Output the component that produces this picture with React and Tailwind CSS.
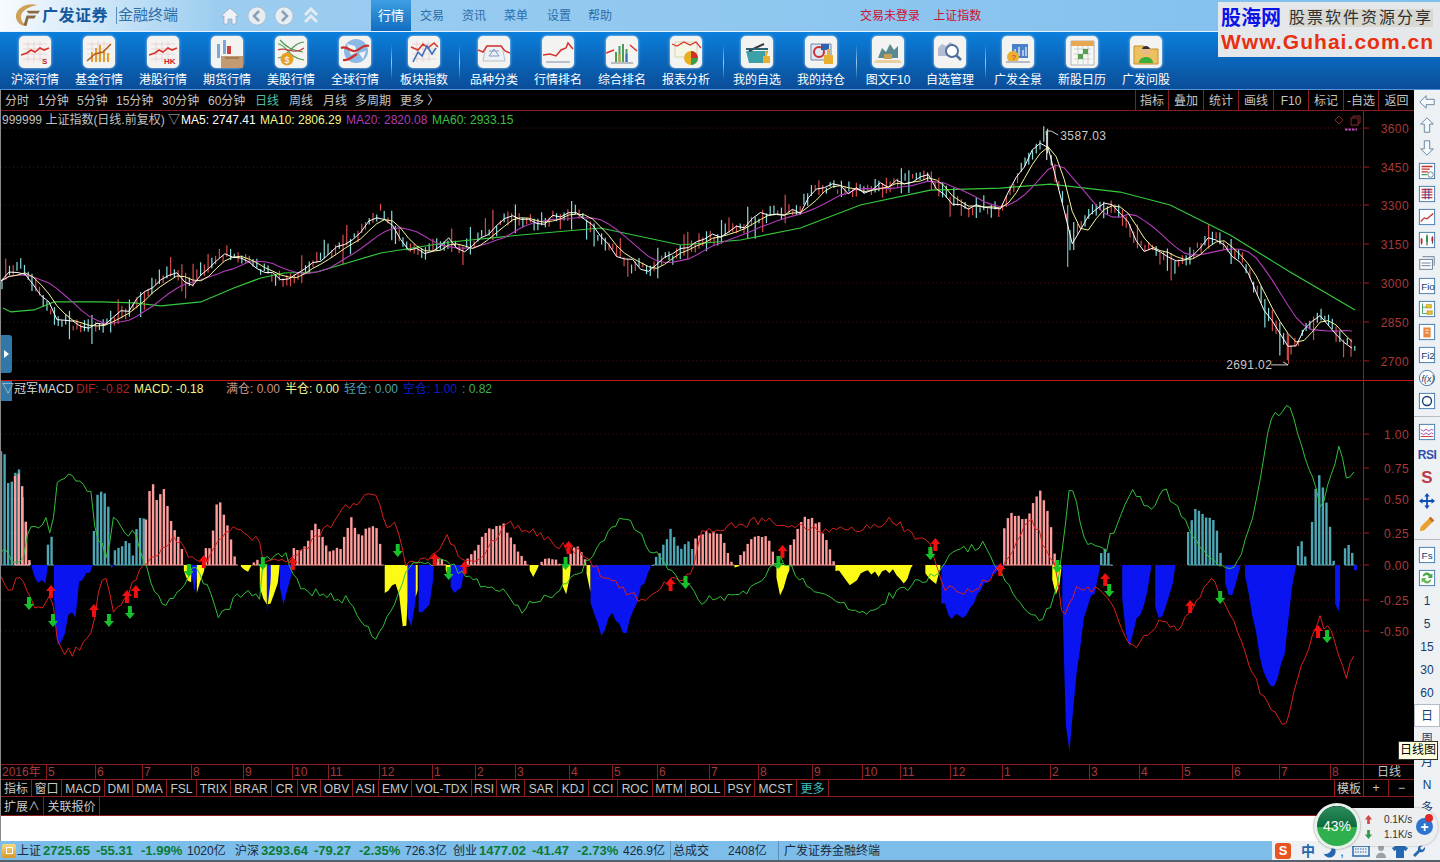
import React from 'react';

// seeded noise so the chart is the same on every load
let seed = 20160817;
const rnd = () => {
  seed = (seed * 1664525 + 1013904223) % 4294967296;
  return seed / 4294967296;
};

const lerp = (pts, x) => {
  if (x <= pts[0][0]) return pts[0][1];
  for (let i = 1; i < pts.length; i++) {
    if (x <= pts[i][0]) {
      const [x0, y0] = pts[i - 1];
      const [x1, y1] = pts[i];
      return y0 + ((y1 - y0) * (x - x0)) / (x1 - x0 || 1);
    }
  }
  return pts[pts.length - 1][1];
};
const toLine = pts => pts.map(p => `${p[0].toFixed(1)},${p[1].toFixed(1)}`).join(' ');
const jitter = (pts, amp, step = 4) => {
  const out = [];
  const end = pts[pts.length - 1][0];
  for (let x = pts[0][0]; x <= end; x += step) out.push([x, lerp(pts, x) + (rnd() - 0.5) * amp]);
  return out;
};
const lagged = (pts, n) =>
  pts.map((p, i) => {
    const from = Math.max(0, i - n + 1);
    const part = pts.slice(from, i + 1);
    return [p[0], part.reduce((s, q) => s + q[1], 0) / part.length];
  });

const CLOSE = [[0,280],[20,265],[40,295],[60,322],[90,328],[120,315],[140,300],[165,272],[190,283],[218,255],[250,262],[285,285],[320,258],[350,240],[380,212],[400,240],[420,255],[445,240],[460,250],[510,218],[540,222],[580,212],[600,240],[625,262],[650,268],[680,250],[720,235],[770,212],[800,210],[815,185],[860,192],[925,175],[960,208],[1000,210],[1020,170],[1045,135],[1062,200],[1072,240],[1090,210],[1115,205],[1140,245],[1175,265],[1215,235],[1245,265],[1270,320],[1290,350],[1320,315],[1340,335],[1356,350]];
const MA60 = [[2,308],[10,312],[33,310],[53,302],[100,302],[133,303],[160,306],[200,302],[233,288],[260,278],[283,273],[316,272],[380,253],[450,242],[520,235],[600,228],[680,245],[740,240],[800,228],[860,205],[930,190],[1000,188],[1050,184],[1120,192],[1170,205],[1230,235],[1290,272],[1355,310]];

const ma5 = jitter(CLOSE, 9, 8);
const ma10 = lagged(ma5, 3);
const ma20 = lagged(ma5, 7);
const candles = [];
for (let x = 1; x < 1357; x += 3.75) {
  const mid = lerp(CLOSE, x) + (rnd() - 0.5) * 8;
  const up = rnd() > 0.5;
  // most days are a thin stroke, only some stick far out
  const long = rnd() > 0.7;
  candles.push({ x, up, hi: mid - 2 - rnd() * (long ? 14 : 5), lo: mid + 2 + rnd() * (long ? 16 : 5) });
}

const HIST = [
  ['t',[[0,450],[3,448],[8,490],[13,475],[18,470],[22,500],[26,537],[29,565]]],
  ['p',[[14,474],[18,472],[22,490],[26,537],[29,565]]],
  ['b',[[30,565],[35,583],[45,582],[47,565]]],
  ['t',[[47,543],[52,537],[53,565]]],
  ['b',[[53,600],[55,637],[58,650],[67,627],[68,603],[75,617],[78,583],[90,570],[92,565]]],
  ['t',[[93,530],[95,497],[102,488],[108,507],[110,565]]],
  ['b',[[110,565],[112,577],[114,565]]],
  ['t',[[114,552],[127,540],[132,555],[137,520],[143,518],[145,565]]],
  ['p',[[145,520],[150,478],[157,503],[162,485],[170,520],[177,537],[182,553],[183,565]]],
  ['y',[[183,572],[190,583],[191,565]]],
  ['b',[[190,570],[192,600],[196,575]]],
  ['y',[[196,590],[200,583],[203,570],[204,565]]],
  ['p',[[205,550],[210,547],[216,502],[220,503],[227,527],[233,553],[237,565]]],
  ['y',[[240,568],[243,572],[248,573],[252,566]]],
  ['p',[[253,562],[257,558],[260,565]]],
  ['y',[[259,590],[262,597],[267,610],[272,600],[278,580],[279,565]]],
  ['b',[[266,610],[268,616],[270,575]]],
  ['b',[[279,590],[283,608],[290,577],[292,565]]],
  ['p',[[293,550],[303,548],[315,523],[327,550],[340,547],[350,517],[360,540],[365,528],[377,528],[383,565]]],
  ['y',[[384,590],[387,593],[397,580],[400,617],[405,637],[407,600]]],
  ['b',[[407,620],[410,633],[415,600]]],
  ['y',[[415,600],[417,590]]],
  ['b',[[418,610],[430,607],[433,570]]],
  ['p',[[434,560],[440,555],[445,565]]],
  ['y',[[445,570],[448,587],[450,570]]],
  ['b',[[450,585],[453,595],[462,583],[464,565]]],
  ['p',[[467,560],[473,552],[488,528],[503,525],[518,552],[528,565]]],
  ['y',[[529,570],[533,578],[538,566]]],
  ['p',[[541,560],[550,556],[560,565]]],
  ['y',[[562,585],[566,592],[570,570]]],
  ['p',[[570,552],[578,545],[586,565]]],
  ['y',[[586,572],[590,592]]],
  ['b',[[590,600],[597,622],[600,636],[610,615],[618,620],[625,635],[640,590],[650,568]]],
  ['t',[[652,565],[660,550],[670,530],[680,550],[690,540],[695,565]]],
  ['p',[[695,540],[705,530],[720,535],[730,560],[734,565]]],
  ['y',[[734,566],[737,569],[739,566]]],
  ['p',[[740,555],[750,540],[765,535],[775,555]]],
  ['y',[[776,575],[780,595],[789,570]]],
  ['p',[[790,545],[805,515],[820,525],[835,565]]],
  ['y',[[835,568],[850,587],[862,575],[865,572],[875,575],[890,570],[905,582],[912,566]]],
  ['y',[[925,570],[935,590],[940,570]]],
  ['b',[[941,600],[950,615],[965,620],[980,590],[1000,570],[1003,565]]],
  ['p',[[1004,530],[1010,512],[1025,520],[1040,490],[1050,520],[1056,565]]],
  ['y',[[1052,580],[1058,600],[1061,570]]],
  ['b',[[1062,600],[1066,740],[1070,758],[1075,680],[1085,610],[1095,590],[1100,566]]],
  ['t',[[1101,555],[1106,545],[1112,565]]],
  ['b',[[1122,600],[1128,652],[1135,625],[1145,600],[1151,570]]],
  ['b',[[1155,610],[1160,620],[1172,585],[1175,566]]],
  ['t',[[1188,530],[1195,510],[1205,515],[1215,520],[1222,565]]],
  ['b',[[1225,580],[1230,600],[1240,570]]],
  ['b',[[1245,575],[1250,600],[1262,670],[1275,690],[1285,650],[1293,580],[1296,566]]],
  ['t',[[1298,545],[1302,540],[1307,565]]],
  ['t',[[1312,520],[1318,470],[1326,500],[1332,540],[1334,565]]],
  ['b',[[1335,600],[1337,630],[1340,600]]],
  ['t',[[1345,550],[1350,542],[1355,565]]],
  ['b',[[1354,570],[1355,582],[1357,570]]],
];
const BAR_COLOR = { p: '#ff9c9c', t: '#4fa7b5' };
const FILL_COLOR = { b: '#0a14f0', y: '#fbfb16' };

const REDLINE = [[0,577],[10,593],[17,570],[28,600],[43,610],[50,593],[58,650],[73,653],[90,633],[100,583],[107,580],[112,617],[127,593],[143,566],[170,540],[182,540],[187,560],[203,563],[230,525],[247,540],[257,533],[262,565],[290,560],[320,535],[345,507],[375,493],[385,525],[395,523],[405,565],[435,555],[445,535],[460,560],[480,560],[505,522],[530,530],[560,545],[585,555],[600,575],[640,600],[660,585],[690,575],[700,535],[760,520],[810,530],[850,530],[890,520],[930,545],[945,590],[970,590],[1000,570],[1030,515],[1056,570],[1062,620],[1075,590],[1105,590],[1125,635],[1135,650],[1160,620],[1180,630],[1210,575],[1225,600],[1240,640],[1260,690],[1285,730],[1300,670],[1320,620],[1335,640],[1345,680],[1355,650]];
const GREENLINE = [[0,550],[20,566],[28,532],[45,520],[50,540],[57,480],[73,477],[90,493],[95,537],[107,557],[112,513],[125,533],[132,530],[143,560],[150,587],[163,605],[183,587],[193,567],[203,580],[218,617],[240,593],[260,597],[262,560],[285,555],[300,590],[325,595],[345,600],[375,637],[395,600],[407,565],[445,560],[470,580],[500,590],[520,610],[560,590],[585,565],[600,545],[625,515],[650,550],[670,570],[700,600],[740,595],[780,560],[820,595],[860,615],[900,590],[935,575],[950,550],[985,545],[1010,590],[1040,625],[1057,590],[1070,480],[1085,540],[1105,550],[1130,490],[1150,510],[1165,490],[1190,530],[1210,560],[1235,570],[1255,510],[1270,420],[1288,402],[1310,470],[1322,510],[1340,440],[1347,480],[1356,465]];
const redJ = jitter(REDLINE, 9, 3.75);
const greenJ = jitter(GREENLINE, 9, 3.75);

const UPS = [[50,592],[93,611],[126,597],[135,592],[203,562],[292,564],[434,560],[464,568],[568,548],[670,585],[782,552],[1000,570],[1105,580],[1190,607],[1318,632],[935,545]];
const DOWNS = [[28,603],[52,620],[108,620],[129,612],[188,570],[262,563],[397,550],[448,573],[565,563],[685,582],[778,562],[930,553],[1057,566],[1109,590],[1220,597],[1327,636]];

const MAIN_TICKS = [['3600',128],['3450',167],['3300',205],['3150',244],['3000',283],['2850',322],['2700',361]];
const SUB_TICKS = [['1.00',434],['0.75',468],['0.50',499],['0.25',533],['0.00',565],['-0.25',600],['-0.50',631]];

function PriceChart() {
  return (
    <svg viewBox="0 111 1414 269" className="absolute inset-0 w-full h-full">
      {MAIN_TICKS.map(([label, y]) => (
        <g key={label}>
          <line x1="0" x2="1364" y1={y} y2={y} stroke="#5c1212" strokeDasharray="1 3" />
          <line x1="1364" x2="1369" y1={y} y2={y} stroke="#a01c1c" />
          <text x="1409" y={y + 5} textAnchor="end" fontSize="12" fill="#a83a3a" letterSpacing=".4">{label}</text>
        </g>
      ))}
      <line x1="1363.5" x2="1363.5" y1="111" y2="380" stroke="#a01c1c" />
      {candles.map((c, i) => (
        <line key={i} x1={c.x} x2={c.x} y1={c.hi} y2={c.lo} stroke={c.up ? '#d84c4c' : '#86dcdc'} strokeWidth="1.2" />
      ))}
      <line x1="1067.5" x2="1067.5" y1="205" y2="267" stroke="#86dcdc" />
      <line x1="1288.5" x2="1288.5" y1="335" y2="364" stroke="#d84c4c" />
      <line x1="1046.5" x2="1046.5" y1="131" y2="160" stroke="#ffffff" />
      <polyline points={toLine(MA60)} fill="none" stroke="#35c93c" strokeWidth="1.2" />
      <polyline points={toLine(ma20)} fill="none" stroke="#b23cb8" strokeWidth="1.1" />
      <polyline points={toLine(ma10)} fill="none" stroke="#f7f79a" />
      <polyline points={toLine(ma5)} fill="none" stroke="#ffffff" />
      <polyline points="1046,135 1046,131 1051,131 1058,135" fill="none" stroke="#d0d0d0" />
      <text x="1060" y="140" fontSize="12" fill="#c8c8c8" letterSpacing=".4">3587.03</text>
      <text x="1226" y="369" fontSize="12" fill="#c8c8c8" letterSpacing=".4">2691.02</text>
      <polyline points="1271,365 1288,365 1283,362" fill="none" stroke="#d0d0d0" />
      <path d="M1339 116l4 4-4 4-4-4z" fill="none" stroke="#8c2a2a" />
      <rect x="1351" y="118" width="7" height="7" fill="none" stroke="#8c2a2a" />
      <path d="M1353 118v-2h7v7h-2" fill="none" stroke="#8c2a2a" />
      <line x1="1345" x2="1357" y1="129.5" y2="129.5" stroke="#c050c8" strokeWidth="2" strokeDasharray="2.5 1" />
    </svg>
  );
}

function MacdChart() {
  return (
    <svg viewBox="0 381 1414 383" className="absolute inset-0 w-full h-full">
      {SUB_TICKS.map(([label, y]) => (
        <g key={label}>
          <line x1="0" x2="1364" y1={y} y2={y} stroke="#5c1212" strokeDasharray="1 3" />
          <line x1="1364" x2="1369" y1={y} y2={y} stroke="#a01c1c" />
          <text x="1409" y={y + 5} textAnchor="end" fontSize="12" fill="#a83a3a" letterSpacing=".4">{label}</text>
        </g>
      ))}
      <line x1="1363.5" x2="1363.5" y1="381" y2="764" stroke="#b01c1c" />
      {HIST.map(([kind, pts], i) => {
        const x0 = pts[0][0];
        const x1 = pts[pts.length - 1][0];
        if (kind === 'b' || kind === 'y') {
          const env = jitter(pts, 7, 3.6);
          const shape = [[x0, 565], ...env, [x1, lerp(pts, x1)], [x1, 565]];
          return <polygon key={i} points={toLine(shape)} fill={FILL_COLOR[kind]} />;
        }
        const bars = [];
        for (let x = x0; x <= x1; x += 3.6) bars.push(x);
        return (
          <g key={i} stroke={BAR_COLOR[kind]}>
            <line x1={x0} x2={x1} y1="565" y2="565" />
            {bars.map(x => (
              <line key={x} x1={x} x2={x} y1="565" y2={lerp(pts, x) + (rnd() - 0.5) * 4} strokeWidth="2.4" />
            ))}
          </g>
        );
      })}
      <polyline points={toLine(redJ)} fill="none" stroke="#d8201c" />
      <polyline points={toLine(greenJ)} fill="none" stroke="#32c03a" />
      {UPS.map(([x, y]) => (
        <path key={x} d={`M${x} ${y - 7}l5 6h-3v7h-4v-7h-3z`} fill="#f01010" />
      ))}
      {DOWNS.map(([x, y]) => (
        <path key={x} d={`M${x} ${y + 7}l5-6h-3v-7h-4v7h-3z`} fill="#16c22a" />
      ))}
    </svg>
  );
}

const Paper = ({ children }) => (
  <div className="w-[32px] h-[32px] rounded-[5px] bg-[#f3f3f1] shadow-[0_0_3px_rgba(255,255,255,0.75)]">
    <svg viewBox="0 0 32 32" className="w-full h-full">{children}</svg>
  </div>
);
const Ruled = () => (
  <path d="M4 8h24M4 13h24M4 18h24M4 23h24M9 5v21M15 5v21M21 5v21" stroke="#e6c8c8" strokeWidth=".7" fill="none" />
);
const Trend = () => <polyline points="2,19 8,17 12,14 16,16 21,12 25,14 30,12" fill="none" stroke="#d8342c" strokeWidth="1.6" />;

const ICONS = {
  sh: <><Ruled /><Trend /><text x="23" y="28" fontSize="8" fontWeight="700" fill="#c8242c">S</text></>,
  fund: <><Ruled /><path d="M8 26V16h2v10zM12 26V12h2v14zM16 26V9h2v17zM20 26V14h2v12zM24 26V17h2v9z" fill="#e0a030" /><polyline points="4,25 12,18 20,16 28,8" fill="none" stroke="#b85a18" strokeWidth="1.5" /></>,
  hk: <><Ruled /><Trend /><text x="17" y="28" fontSize="8" fontWeight="700" fill="#c8242c">HK</text></>,
  future: <><path d="M6 8h3v14H6zM12 4h3v14h-3z" fill="#7aa8d8" /><path d="M16 10h4v8h-4z" fill="#d04040" /><path d="M10 20h22v12H10z" fill="#c49a72" /><path d="M14 22h14" stroke="#8a6038" /></>,
  us: <><path d="M3 8c8 0 10 14 26 16M3 22C12 22 18 6 29 6M5 4c7 8 12 10 23 12" fill="none" stroke="#4e9a50" strokeWidth="1.2" /><path d="M3 14c8-4 16 6 26-2" fill="none" stroke="#c04040" strokeWidth="1.2" /><circle cx="12" cy="23" r="6.5" fill="#e8a020" /><text x="9.5" y="26.5" fontSize="9" fill="#fff">$</text></>,
  globe: <><circle cx="17" cy="15" r="12" fill="#8cb8e4" /><path d="M8 8l8 2 2 6-6 3zM20 17l7-2-3 8z" fill="#f4f4f4" /><path d="M2 12c6-3 9 4 14 3s8-7 14-5M4 24c6 1 10-4 14-6" fill="none" stroke="#d03028" strokeWidth="2.2" /></>,
  plate: <><Ruled /><polyline points="3,11 10,14 15,8 20,12 26,7 30,11" fill="none" stroke="#d8342c" strokeWidth="1.6" /><polyline points="5,26 10,16 14,20 19,10 24,18 28,12" fill="none" stroke="#3c70c0" strokeWidth="1.6" /></>,
  kind: <><path d="M5 25h22l-3-15H8z" fill="#eef0f4" stroke="#b8c0d0" /><path d="M11 20l5-7 5 7zM11 15h10" fill="none" stroke="#7aa0c8" /><polyline points="0,14 5,16 9,10 23,10 27,15 32,17" fill="none" stroke="#d8342c" strokeWidth="1.5" /></>,
  rank: <><path d="M4 26h24" stroke="#b8c0d0" strokeWidth="2" /><polyline points="1,19 8,18 14,20 19,14 24,12 26,7 31,13" fill="none" stroke="#d8342c" strokeWidth="1.5" /></>,
  score: <><path d="M9 26V16h2v10zM12.500 26V10h2v16zM16 26V8h2v18zM19.500 26V13h2v13z" fill="#4a9c5c" /><path d="M12.500 26V18h2v8z" fill="#d8a030" /><path d="M19.500 26V18h2v8z" fill="#3a70c0" /><path d="M5 27h22" stroke="#808890" /><path d="M0 17l8-3M24 9l7 6" fill="none" stroke="#d8342c" strokeWidth="1.5" /></>,
  report: <><path d="M5 6h22v15H5z" fill="#f6f6e4" stroke="#d4d4b0" /><polyline points="2,8 7,10 14,6 20,9 26,6 31,12" fill="none" stroke="#d8342c" strokeWidth="1.2" /><circle cx="21" cy="22" r="7" fill="#e8b020" /><path d="M21 22v-7a7 7 0 0 1 7 7z" fill="#d03028" /><path d="M21 22h7a7 7 0 0 1-7 7z" fill="#3c9c50" /></>,
  basket: <><path d="M5 15h22l-3 12H8z" fill="#3ba0a8" /><path d="M8 15l15-7" stroke="#303840" strokeWidth="2" /><path d="M5 13h22" stroke="#306070" strokeWidth="2" /><path d="M22 27v-7h2v-5h2v5h3v7z" fill="#e8b030" /></>,
  hold: <><path d="M6 8h20v16H6z" fill="#dfe6f2" stroke="#7088a8" /><circle cx="14" cy="16" r="5" fill="none" stroke="#c83030" strokeWidth="2" /><path d="M16 8h8v6h-8z" fill="#3060b0" /><path d="M19 28v-9h3v-6h3v6h3v9z" fill="#e8b030" /></>,
  f10: <><path d="M6 22l4-10 4 4 4-8 4 6 4-4v12z" fill="#5a8a90" /><path d="M4 24h24l2 3H2z" fill="#e8d0a0" /><path d="M12 18h8v5h-8z" fill="#c8a050" /></>,
  manage: <><path d="M4 12l4-4 4 2 4-4 6 4v10H4z" fill="#b4bcd0" /><circle cx="18" cy="15" r="6" fill="#fff" stroke="#5070a0" strokeWidth="2" /><path d="M22 19l5 5" stroke="#5070a0" strokeWidth="2.5" /></>,
  view: <><path d="M10 8h16v14H10z" fill="#4a80c8" /><path d="M13 20v-7M17 20V11M21 20v-6M24 20v-9" stroke="#cfe0f4" strokeWidth="1.5" /><circle cx="11" cy="21" r="6" fill="#eeae32" /><path d="M4 26h24" stroke="#b8bcc4" strokeWidth="2" /><text x="9.500" y="24" fontSize="8" fill="#c03020">?</text></>,
  ipo: <><path d="M5 5h23v24H5z" fill="#f8f8f0" stroke="#b0b4c0" /><path d="M5 5h23v5H5z" fill="#e8a850" /><path d="M8 13h17M8 18h17M8 23h17M12 10v18M17 10v18M22 10v18" stroke="#b8c0d0" strokeWidth=".7" /><path d="M12 18h5v5h-5zM17 13h5v5h-5z" fill="#58a050" /></>,
  ask: <><path d="M4 10h10l2 3h12v15H4z" fill="#eec060" stroke="#c09030" /><circle cx="16" cy="15" r="4" fill="#e8b888" /><path d="M12 13c1-4 7-4 8 0z" fill="#303030" /><path d="M9 27c0-8 14-8 14 0z" fill="#3cae3c" /></>,
};

const TOOLS1 = [['沪深行情','sh'],['基金行情','fund'],['港股行情','hk'],['期货行情','future'],['美股行情','us'],['全球行情','globe']];
const TOOLS2 = [['品种分类','kind'],['行情排名','rank'],['综合排名','score'],['报表分析','report']];
const TOOLS3 = [['我的自选','basket'],['我的持仓','hold']];
const TOOLS4 = [['图文F10','f10'],['自选管理','manage']];
const TOOLS5 = [['广发全景','view'],['新股日历','ipo'],['广发问股','ask']];

function Tool({ label, icon, narrow }) {
  return (
    <div className={`flex flex-col items-center shrink-0 ${narrow ? 'w-[62px]' : 'w-[64px]'}`}>
      <Paper>{ICONS[icon]}</Paper>
      <span className="mt-[4px] text-[12px] leading-[16px] text-white whitespace-nowrap">{label}</span>
    </div>
  );
}
const ToolSep = ({ className }) => (
  <div className={`w-px h-[36px] mt-[8px] shrink-0 bg-gradient-to-b from-transparent via-[#9cc8ec] to-transparent ${className}`} />
);

function TitleBar() {
  const menus = [['交易','ml-[9px]'],['资讯','ml-[18px]'],['菜单','ml-[18px]'],['设置','ml-[19px]'],['帮助','ml-[17px]']];
  return (
    <div className="h-[31px] flex items-center shrink-0 bg-gradient-to-r from-[#f8fbfe] via-[#9ccdf0] via-[15%] to-[#7fbfee]">
      <svg viewBox="0 0 28 26" className="w-[27px] h-[25px] ml-[14px] shrink-0">
        <path d="M24 2C11-1 1 7 2 15c1 6 6 9 11 9-5-4-7-8-5-13 2-4 8-7 16-9z" fill="#cfa058" />
        <path d="M13 8h14l-2 3H15zM13 13h10l-2 3h-6l-2 8-3-1z" fill="#8a6a40" />
      </svg>
      <span className="ml-[1px] text-[16px] font-bold text-[#14589e] tracking-[0.5px] whitespace-nowrap">广发证券</span>
      <span className="ml-[8px] w-px h-[17px] bg-[#5a8fbc]" />
      <span className="ml-[1px] text-[15px] text-[#2e6ea6] whitespace-nowrap">金融终端</span>
      <svg viewBox="0 0 20 20" className="w-[20px] h-[20px] ml-[42px] shrink-0">
        <path d="M10 2L1 10h3v8h4v-5h4v5h4v-8h3z" fill="#eef2f6" stroke="#98a8b8" strokeWidth=".7" />
      </svg>
      <svg viewBox="0 0 20 20" className="w-[20px] h-[20px] ml-[7px] shrink-0">
        <circle cx="10" cy="10" r="9" fill="#e8edf2" stroke="#a8b8c8" strokeWidth=".7" />
        <path d="M12 5l-5 5 5 5" fill="none" stroke="#8aa0b6" strokeWidth="2.500" />
      </svg>
      <svg viewBox="0 0 20 20" className="w-[20px] h-[20px] ml-[7px] shrink-0">
        <circle cx="10" cy="10" r="9" fill="#e8edf2" stroke="#a8b8c8" strokeWidth=".7" />
        <path d="M8 5l5 5-5 5" fill="none" stroke="#8aa0b6" strokeWidth="2.500" />
      </svg>
      <svg viewBox="0 0 16 18" className="w-[16px] h-[18px] ml-[9px] shrink-0">
        <path d="M2 8l6-6 6 6M2 15l6-6 6 6" fill="none" stroke="#e4eaf0" strokeWidth="3" />
      </svg>
      <div className="ml-[52px] w-[40px] h-[31px] flex items-center justify-center text-[13px] text-white bg-gradient-to-b from-[#3f9fe2] to-[#0f6cc0]">行情</div>
      {menus.map(([m, cls]) => (
        <span key={m} className={`${cls} text-[12px] text-[#2c6ca8] whitespace-nowrap`}>{m}</span>
      ))}
      <span className="ml-[248px] text-[12px] text-[#d01030] whitespace-nowrap">交易未登录</span>
      <span className="ml-[13px] text-[12px] text-[#d01030] whitespace-nowrap">上证指数</span>
    </div>
  );
}

function Toolbar() {
  const row = (items, narrow) => items.map(([label, icon]) => <Tool key={label} label={label} icon={icon} narrow={narrow} />);
  return (
    <div className="h-[59px] flex pl-[3px] pt-[4px] shrink-0 border-t border-[#e6f2fb] border-b border-b-[#4f94dc] bg-gradient-to-b from-[#0a7fdc] to-[#0a4d98]">
      {row(TOOLS1)}
      <ToolSep className="ml-[4px]" />
      <Tool label="板块指数" icon="plate" />
      <ToolSep className="ml-[3px] mr-[2px]" />
      {row(TOOLS2)}
      <ToolSep className="ml-[5px] mr-px" />
      {row(TOOLS3)}
      <ToolSep className="ml-[3px]" />
      {row(TOOLS4, true)}
      <ToolSep className="ml-[4px]" />
      {row(TOOLS5)}
    </div>
  );
}

const PERIODS = [['分时','w-[33px]'],['1分钟','w-[39px]'],['5分钟','w-[39px]'],['15分钟','w-[46px]'],['30分钟','w-[46px]'],['60分钟','w-[47px]'],['日线','w-[34px]'],['周线','w-[34px]'],['月线','w-[32px]'],['多周期','w-[45px]'],['更多 〉','w-[40px]']];
const ACTIONS = [['指标','w-[33px]'],['叠加','w-[35px]'],['统计','w-[35px]'],['画线','w-[35px]'],['F10','w-[35px]'],['标记','w-[35px]'],['-自选','w-[35px]'],['返回','w-[36px]']];

function PeriodBar() {
  return (
    <div className="h-[21px] flex items-center justify-between shrink-0 bg-black border-b border-[#8c1c1c] text-[12px] text-[#c4c4c4]">
      <div className="flex pl-[4px] pt-px">
        {PERIODS.map(([p, w]) => (
          <span key={p} className={`${w} whitespace-nowrap ${p === '日线' ? 'text-[#4fc0a8]' : ''}`}>{p}</span>
        ))}
      </div>
      <div className="flex h-full">
        {ACTIONS.map(([a, w]) => (
          <span key={a} className={`${w} pt-px flex items-center justify-center border-l border-[#8c1c1c] whitespace-nowrap`}>{a}</span>
        ))}
      </div>
    </div>
  );
}

function MainPanel() {
  return (
    <div className="relative h-[269px] shrink-0 bg-black">
      <PriceChart />
      <div className="relative flex pl-px pt-px text-[12px] leading-[16px] whitespace-nowrap">
        <span className="w-[179px] text-[#c0c0c0]">999999 上证指数(日线.前复权) ▽</span>
        <span className="w-[79px] text-white">MA5: 2747.41</span>
        <span className="w-[86px] text-[#f6f68c]">MA10: 2806.29</span>
        <span className="w-[86px] text-[#b03cb4]">MA20: 2820.08</span>
        <span className="text-[#3cc040]">MA60: 2933.15</span>
      </div>
      <div className="absolute left-0 top-[224px] w-[11px] h-[38px] rounded-r-[3px] bg-[#2f78a8] flex items-center justify-center">
        <span className="w-0 h-0 border-y-[4px] border-y-transparent border-l-[5px] border-l-white" />
      </div>
    </div>
  );
}

function MacdPanel() {
  return (
    <div className="relative h-[383px] shrink-0 bg-black border-0">
      <MacdChart />
      <div className="absolute left-0 top-0 w-[11px] h-[20px] bg-[#2f78a8]" />
      <div className="relative flex pl-px text-[12px] leading-[16px] whitespace-nowrap">
        <span className="w-[74px] text-[#d8d8d8]">▽冠军MACD</span>
        <span className="w-[58px] text-[#b02424]">DIF: -0.82</span>
        <span className="w-[92px] text-[#f4f48c]">MACD: -0.18</span>
        <span className="w-[59px] text-[#c89088]">满仓: 0.00</span>
        <span className="w-[59px] text-[#f4f48c]">半仓: 0.00</span>
        <span className="w-[59px] text-[#4f9fae]">轻仓: 0.00</span>
        <span className="w-[59px] text-[#0a1fc8]">空仓: 1.00</span>
        <span className="text-[#3cae50]">: 0.82</span>
      </div>
    </div>
  );
}

const MONTHS = [['2016年',1],['5',46],['6',95],['7',142],['8',191],['9',243],['10',292],['11',328],['12',379],['1',432],['2',475],['3',515],['4',569],['5',612],['6',657],['7',709],['8',758],['9',812],['10',862],['11',900],['12',950],['1',1002],['2',1050],['3',1089],['4',1139],['5',1182],['6',1232],['7',1279],['8',1330]];

function DateAxis() {
  return (
    <div className="h-[16px] flex shrink-0 bg-black border-y border-[#8c1c1c] text-[12px] leading-[15px] text-[#a83a3a]">
      {MONTHS.map(([m, x], i) => {
        const next = i + 1 < MONTHS.length ? MONTHS[i + 1][1] : 1363;
        return (
          <span key={x} className="border-l border-[#8c1c1c] pl-[1px] shrink-0 first:border-l-0" style={{ width: next - x }}>{m}</span>
        );
      })}
      <span className="flex-1 border-l border-[#a01c1c] text-center text-[#c4c4c4]">日线</span>
    </div>
  );
}

const TABS = [['指标','w-[31px]'],['窗口','w-[30px]'],['MACD','w-[43px]'],['DMI','w-[28px]'],['DMA','w-[34px]'],['FSL','w-[30px]'],['TRIX','w-[34px]'],['BRAR','w-[41px]'],['CR','w-[26px]'],['VR','w-[23px]'],['OBV','w-[32px]'],['ASI','w-[26px]'],['EMV','w-[33px]'],['VOL-TDX','w-[60px]'],['RSI','w-[25px]'],['WR','w-[28px]'],['SAR','w-[33px]'],['KDJ','w-[31px]'],['CCI','w-[29px]'],['ROC','w-[35px]'],['MTM','w-[33px]'],['BOLL','w-[39px]'],['PSY','w-[30px]'],['MCST','w-[42px]'],['更多','w-[32px]']];

function TabRows() {
  return (
    <>
      <div className="h-[17px] flex shrink-0 bg-black border-b border-[#8c1c1c] text-[12px] text-[#c8c8c8] whitespace-nowrap">
        {TABS.map(([t, w]) => (
          <span key={t} className={`${w} pt-px flex items-center justify-center border-r border-[#8c1c1c] ${t === '更多' ? 'text-[#3cc0c0]' : ''}`}>{t}</span>
        ))}
        <span className="ml-auto w-[30px] pt-px flex items-center justify-center border-x border-[#a01c1c]">模板</span>
        <span className="w-[25px] flex items-center justify-center border-r border-[#8c1c1c]">+</span>
        <span className="w-[25px] flex items-center justify-center">−</span>
      </div>
      <div className="h-[19px] flex shrink-0 bg-black border-b border-[#8c1c1c] text-[12px] text-[#c8c8c8] whitespace-nowrap">
        <span className="w-[43px] pt-px flex items-center justify-center border-r border-[#8c1c1c]">扩展∧</span>
        <span className="w-[56px] pt-px flex items-center justify-center border-r border-[#8c1c1c]">关联报价</span>
      </div>
    </>
  );
}

function SideBox({ children, plain }) {
  return (
    <svg viewBox="0 0 20 20" className="w-[18px] h-[18px]">
      {!plain && <rect x="1.500" y="1.500" width="17" height="17" fill="#fbfcfd" stroke="#3c74a8" />}
      {children}
    </svg>
  );
}
const SIDE_TOP = [
  <SideBox plain><path d="M9 3L2 10l7 7v-4h9V7H9z" fill="#f4f8fb" stroke="#5c7c98" /></SideBox>,
  <SideBox plain><path d="M10 2L3 9h4v9h6V9h4z" fill="#f4f8fb" stroke="#5c7c98" /></SideBox>,
  <SideBox plain><path d="M10 18l7-7h-4V2H7v9H3z" fill="#f4f8fb" stroke="#5c7c98" /></SideBox>,
  <SideBox><path d="M4 5h12M4 8h9M4 11h7" stroke="#c83030" strokeWidth="1.400" /><path d="M4 14h6" stroke="#3c9c50" strokeWidth="1.400" /><circle cx="14" cy="14" r="3" fill="none" stroke="#707880" /></SideBox>,
  <SideBox><path d="M4 5h12M4 8h12M4 11h12M4 14h12" stroke="#c83030" strokeWidth="1.400" /><path d="M8 4v12M12 4v12" stroke="#3040b0" /></SideBox>,
  <SideBox><polyline points="3,15 7,11 10,12 17,6" fill="none" stroke="#c83030" strokeWidth="1.400" /></SideBox>,
  <SideBox><path d="M4 8v7M10 4v12M16 6v8" stroke="#1a1a1a" /><path d="M3 9h2v4H3zM15 7h2v4h-2z" fill="#d02020" /><path d="M9 6h2v6H9z" fill="#209040" /></SideBox>,
  <SideBox plain><path d="M5 3h13v10" fill="none" stroke="#607890" /><rect x="2" y="6" width="14" height="11" fill="#fbfcfd" stroke="#607890" /><path d="M4 10h10M4 13h10" stroke="#607890" /></SideBox>,
  <SideBox><text x="3.500" y="14.500" fontSize="11" fill="#143c70">Fio</text></SideBox>,
  <SideBox><path d="M5 4v11h5M5 8h5" fill="none" stroke="#40a060" /><path d="M9 5h6v4H9zM10 12h6v4h-6z" fill="#e8c030" stroke="#a08020" strokeWidth=".5" /></SideBox>,
  <SideBox><path d="M6 5h8v11H6z" fill="#e88840" /><path d="M8 8h4M8 11h4" stroke="#fff" /></SideBox>,
  <SideBox><text x="3.500" y="14.500" fontSize="11" fill="#143c70">Fi2</text></SideBox>,
  <SideBox plain><circle cx="10" cy="10" r="8.500" fill="#fbfcfd" stroke="#3c74a8" /><text x="4" y="14" fontSize="10" fontStyle="italic" fill="#143c70">f(x)</text></SideBox>,
  <SideBox><circle cx="10" cy="10" r="5" fill="none" stroke="#143c70" strokeWidth="1.500" /></SideBox>,
];
const SIDE_MID = [
  <SideBox><path d="M3 7l3 2 3-2 3 2 3-2 2 1M3 11l3 2 3-2 3 2 3-2 2 1" fill="none" stroke="#a03cb0" /><path d="M3 15h14" stroke="#c83030" /></SideBox>,
  <span className="text-[12px] font-bold text-[#2f4eb0] tracking-[-0.5px]">RSI</span>,
  <span className="text-[17px] font-bold text-[#b83a48] leading-none">S</span>,
  <SideBox plain><path d="M10 1l3 4h-2v4h4V7l4 3-4 3v-2h-4v4h2l-3 4-3-4h2v-4H5v2l-4-3 4-3v2h4V5H7z" fill="#0a50b8" /></SideBox>,
  <SideBox plain><path d="M14 2l4 4L7 17l-5 1 1-5z" fill="#e8a030" /><path d="M14 2l4 4-2 2-4-4z" fill="#b87020" /></SideBox>,
];
const SIDE_LOW = [
  <SideBox><text x="4" y="14.500" fontSize="11" fill="#143c70">Fs</text></SideBox>,
  <SideBox><path d="M5 8a5 5 0 0 1 9-2l2-1v5h-5l1-2a3 3 0 0 0-5 0z" fill="#48a848" /><path d="M15 12a5 5 0 0 1-9 2l-2 1v-5h5l-1 2a3 3 0 0 0 5 0z" fill="#68b858" /></SideBox>,
];
const SIDE_TEXT = ['1','5','15','30','60','日','周','月','N','多'];

function Sidebar() {
  const cell = 'h-[23px] flex items-center justify-center';
  return (
    <div className="w-[26px] shrink-0 flex flex-col bg-[#eef1f4] text-[12px] text-[#143c70]">
      {SIDE_TOP.map((icon, i) => <div key={i} className={cell}>{icon}</div>)}
      <div className="h-[8px] flex items-center"><div className="w-full h-px bg-[#b8bcc0]" /></div>
      {SIDE_MID.map((icon, i) => <div key={i} className={cell}>{icon}</div>)}
      <div className="h-[8px] flex items-center"><div className="w-full h-px bg-[#b8bcc0]" /></div>
      {SIDE_LOW.map((icon, i) => <div key={i} className={cell}>{icon}</div>)}
      {SIDE_TEXT.map(t => (
        <div key={t} className={t === '日' ? `${cell} bg-white border border-[#b4bcc4]` : cell}>{t}</div>
      ))}
    </div>
  );
}

const MARKETS = [
  { name: '上证', vals: ['2725.65','-55.31','-1.99%'], amt: '1020亿', w: 'w-[48px]' },
  { name: '沪深', vals: ['3293.64','-79.27','-2.35%'], amt: '726.3亿', w: 'w-[48px]' },
  { name: '创业', vals: ['1477.02','-41.47','-2.73%'], amt: '426.9亿', w: 'w-[47px]' },
];

function StatusBar() {
  return (
    <div className="h-[19px] flex items-center shrink-0 bg-[#7dbde9] text-[12px] text-[#1a2a3a] whitespace-nowrap">
      <div className="ml-[2px] mr-px w-[14px] h-[14px] rounded-[2px] bg-gradient-to-b from-[#f8d880] to-[#d89820] flex items-center justify-center">
        <span className="w-[7px] h-[7px] border border-white" />
      </div>
      {MARKETS.map(m => (
        <div key={m.name} className="flex items-center">
          <span className="w-[26px] text-[12px]">{m.name}</span>
          <span className="w-[53px] text-[13px] font-bold text-[#0a7a34]">{m.vals[0]}</span>
          <span className="w-[45px] text-[13px] font-bold text-[#0a7a34]">{m.vals[1]}</span>
          <span className="w-[46px] text-[13px] font-bold text-[#0a7a34]">{m.vals[2]}</span>
          <span className={m.w}>{m.amt}</span>
        </div>
      ))}
      <span className="w-[58px] h-full pl-[2px] flex items-center border-l border-[#5f8fb4]">总成交</span>
      <span className="w-[50px]">2408亿</span>
      <span className="h-full pl-[5px] flex items-center border-l border-[#5f8fb4] text-[12px]">广发证券金融终端</span>
    </div>
  );
}

function NetWidget() {
  return (
    <div className="absolute left-[1315px] top-[808px] w-[123px] h-[38px] rounded-[19px] bg-[#eceeef] shadow-[0_0_2px_rgba(0,0,0,0.35)] flex items-center">
      <div className="absolute left-[-1px] top-[-5px] w-[46px] h-[46px] rounded-full border-[3px] border-[#e8f0ea] overflow-hidden flex flex-col shadow-[0_0_2px_rgba(0,0,0,0.6)]">
        <div className="h-[53%] bg-gradient-to-b from-[#2c8c5c] to-[#0a6c3c]" />
        <div className="flex-1 bg-[#2eb04e]" />
        <span className="absolute inset-0 flex items-center justify-center text-[14px] text-white">43%</span>
      </div>
      <div className="ml-[49px] flex flex-col gap-[2px] text-[10px] leading-[13px] text-[#303030]">
        <div className="flex items-center">
          <svg viewBox="0 0 10 10" className="w-[9px] h-[9px]"><path d="M5 0l4 5H6.500v5h-3V5H1z" fill="#d04a40" /></svg>
          <span className="ml-[11px]">0.1K/s</span>
        </div>
        <div className="flex items-center">
          <svg viewBox="0 0 10 10" className="w-[9px] h-[9px]"><path d="M5 10l4-5H6.500V0h-3v5H1z" fill="#2e9a50" /></svg>
          <span className="ml-[11px]">1.1K/s</span>
        </div>
      </div>
      <div className="absolute left-[101px] top-[10px] w-[17px] h-[17px] rounded-full bg-[#2c74d0] flex items-center justify-center text-white text-[14px] font-bold leading-none">+</div>
      <div className="absolute left-[110px] top-[6px] w-[8px] h-[8px] rounded-full bg-[#e02828]" />
    </div>
  );
}

function Tray() {
  return (
    <div className="absolute left-[1272px] top-[841px] w-[168px] h-[19px] bg-[#eef1f4] flex items-center pl-[3px] gap-[4px] text-[#2468b0]">
      <span className="w-[16px] h-[16px] rounded-[3px] bg-[#e85420] text-white text-[13px] font-bold leading-[16px] text-center">S</span>
      <span className="ml-[6px] text-[14px] font-bold leading-none">中</span>
      <svg viewBox="0 0 16 16" className="w-[14px] h-[14px] ml-[3px]"><path d="M11 2a7 7 0 1 1-9 9c5 2 10-3 9-9z" fill="#2468b0" /></svg>
      <span className="w-[8px] text-[14px] leading-none">,</span>
      <svg viewBox="0 0 18 14" className="w-[18px] h-[14px]"><rect x="1" y="2" width="16" height="10" fill="none" stroke="#2468b0" strokeWidth="1.500" /><path d="M3 5h12M3 8h12" stroke="#2468b0" strokeDasharray="1.500 1" /></svg>
      <svg viewBox="0 0 14 14" className="w-[14px] h-[14px]"><circle cx="7" cy="4" r="3" fill="#9aa0a6" /><path d="M2 14c0-7 10-7 10 0z" fill="#9aa0a6" /></svg>
      <svg viewBox="0 0 16 14" className="w-[16px] h-[14px]"><path d="M5 1L0 4l2 3 2-1v8h8V6l2 1 2-3-5-3H5z" fill="#2468b0" /></svg>
      <svg viewBox="0 0 14 14" className="w-[14px] h-[14px]"><path d="M13 3l-3 3-2-2 3-3a4 4 0 0 0-5 5L1 11l2 2 5-5a4 4 0 0 0 5-5z" fill="#2468b0" /></svg>
    </div>
  );
}

function Banner() {
  return (
    <div className="absolute left-[1218px] top-[2px] w-[222px] h-[55px] bg-[#e5e8eb] pl-[3px] pt-[4px]">
      <div className="flex items-center h-[24px]">
        <span className="text-[20px] font-bold text-[#0a14e8] leading-none whitespace-nowrap">股海网</span>
        <span className="ml-[8px] text-[16px] leading-[18px] text-[#303030] bg-[#d8d8d0] whitespace-nowrap tracking-[2px]">股票软件资源分享</span>
      </div>
      <div className="text-[21px] font-bold text-[#e83010] leading-[24px] tracking-[1.05px] whitespace-nowrap">Www.Guhai.com.cn</div>
    </div>
  );
}

export default function App() {
  return (
    <div className="relative w-[1440px] h-[862px] overflow-hidden flex flex-col bg-white font-['Liberation_Sans','Noto_Sans_CJK_SC',sans-serif]">
      <TitleBar />
      <Toolbar />
      <div className="flex-1 min-h-0 flex">
        <div className="flex-1 min-w-0 flex flex-col border-l border-l-[#8a8a8a]">
          <PeriodBar />
          <MainPanel />
          <div className="h-px shrink-0 bg-[#c01818]" />
          <MacdPanel />
          <DateAxis />
          <TabRows />
          <div className="flex-1 bg-white" />
        </div>
        <Sidebar />
      </div>
      <StatusBar />
      <div className="h-[2px] shrink-0 bg-[#55606a]" />
      <Banner />
      <Tray />
      <NetWidget />
      <div className="absolute left-[1398px] top-[741px] w-[40px] h-[19px] bg-[#ffffe1] border border-[#303030] text-[12px] leading-[17px] text-center text-black whitespace-nowrap">日线图</div>
    </div>
  );
}
